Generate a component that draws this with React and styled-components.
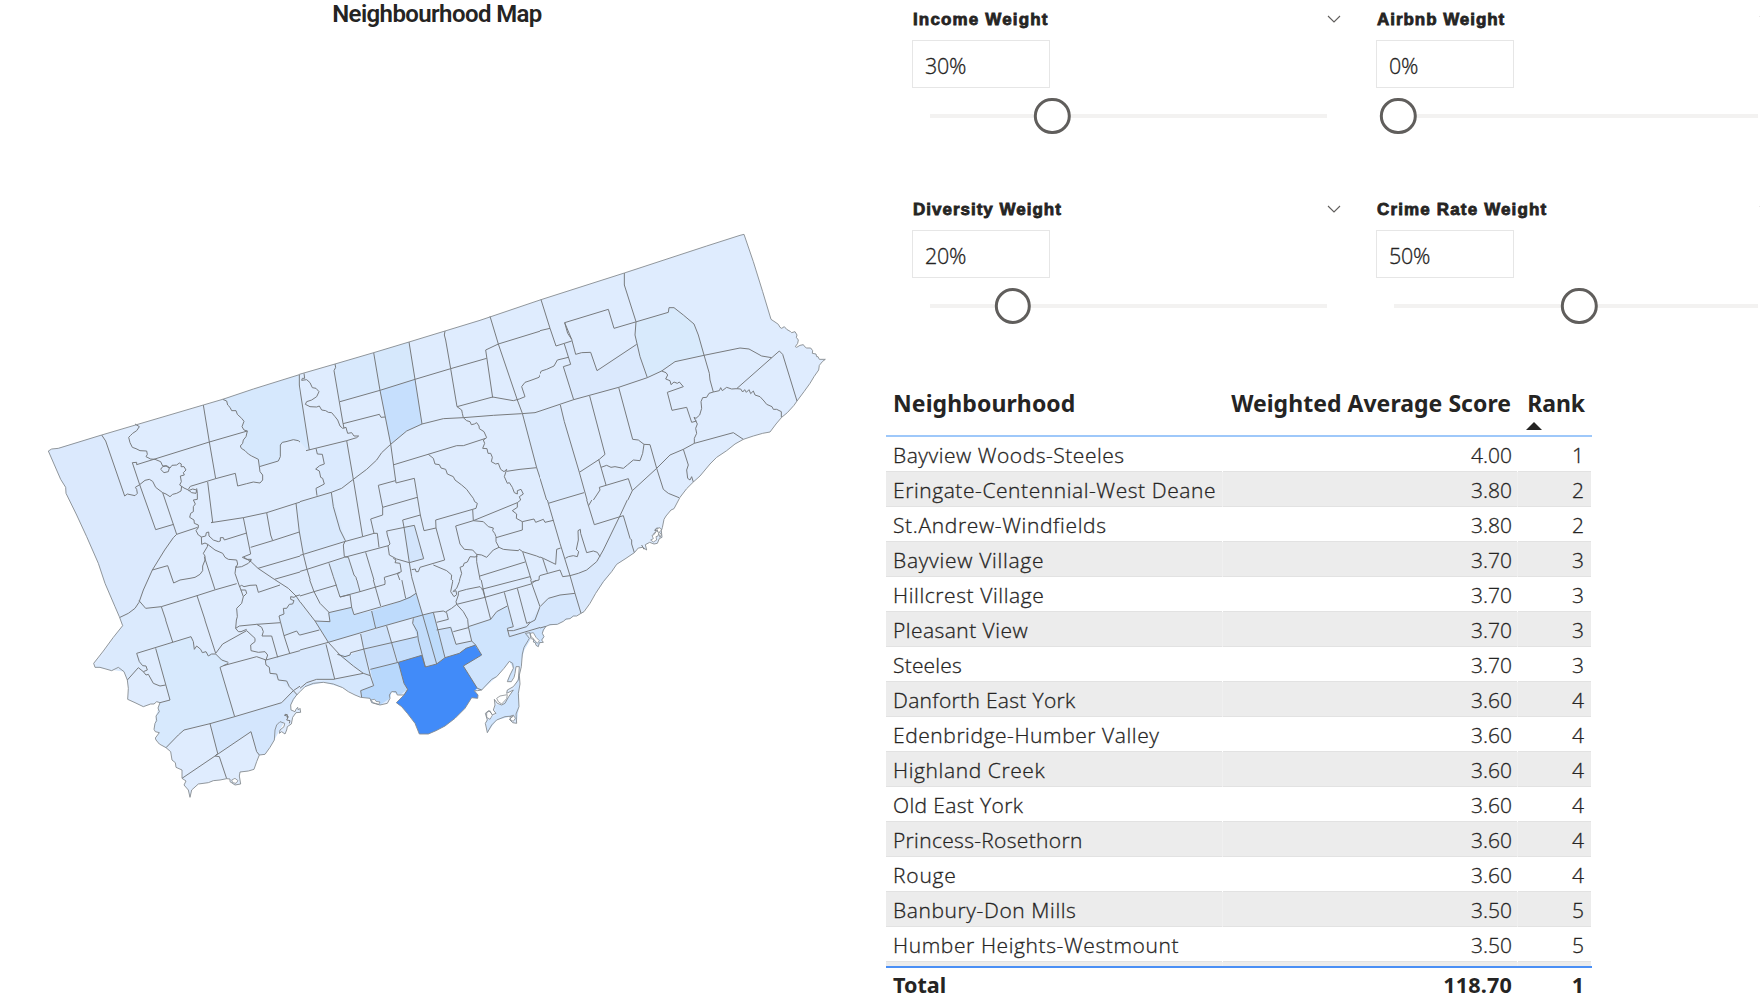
import React from "react";
import styled, { createGlobalStyle } from "styled-components";

const GlobalStyle = createGlobalStyle`
  * { box-sizing: border-box; }
  body { margin: 0; background: #fff; overflow: hidden; }
`;

const Report = styled.main`
  display: grid;
  grid-template-columns: 886px 874px;
  width: 1760px;
  height: 1008px;
  overflow: hidden;
  background: #fff;
  color: #252423;
  font-family: "Open Sans", "Noto Sans", sans-serif;
`;

const MapPanel = styled.section`
  display: flex;
  flex-direction: column;
  height: 1008px;
  overflow: hidden;
`;

const MapTitle = styled.h1`
  height: 30px;
  margin: 0;
  padding-right: 12px;
  font: 600 24px/29px Roboto, sans-serif;
  letter-spacing: -0.6px;
  text-align: center;
`;

const MapDrawing = styled.svg`
  display: block;
  flex: none;
  width: 886px;
  height: 978px;
`;

const SidePanel = styled.section`
  display: flex;
  flex-direction: column;
`;

const Slicers = styled.div`
  display: grid;
  grid-template-columns: 464px 464px;
  grid-template-rows: 190px 190px;
  width: 874px;
  height: 380px;
  padding-left: 26px;
  overflow: hidden;
`;

const Slicer = styled.div`
  display: flex;
  flex-direction: column;
  padding-top: 8px;
`;

const SlicerHeader = styled.div`
  display: flex;
  align-items: center;
  justify-content: space-between;
  width: ${(p) => p.$width}px;
  height: 22px;
  padding-left: 1px;
`;

const SlicerTitle = styled.h2`
  margin: 0;
  padding-top: 2px;
  font: 700 17px/22px "Liberation Sans", sans-serif;
  letter-spacing: ${(p) => p.$tracking}px;
  -webkit-text-stroke: 0.8px #252423;
  white-space: nowrap;
`;

const ValueBox = styled.div`
  width: 138px;
  height: 48px;
  margin-top: 10px;
  padding: 2px 0 0 12px;
  border: 1px solid #e6e6e6;
  font-size: 21.5px;
  line-height: 46px;
  letter-spacing: -0.3px;
  font-weight: 300;
  -webkit-text-stroke: 0.3px #252423;
`;

const Slider = styled.div`
  display: flex;
  align-items: center;
  width: ${(p) => p.$width}px;
  height: 37px;
  margin: 9.5px 0 0 18px;
`;

const Track = styled.div`
  position: relative;
  width: 100%;
  height: 4px;
  background: #f3f2f1;
`;

const Thumb = styled.div`
  position: absolute;
  top: -16.2px;
  width: 36.4px;
  height: 36.4px;
  border: 3px solid #605e5c;
  border-radius: 50%;
  background: #fff;
  transform: translateX(-50%);
`;

const Table = styled.div`
  display: flex;
  flex-direction: column;
  width: 706px;
  font-size: 21px;
`;

const columns = "337px 295px 74px";

const HeadRow = styled.div`
  display: grid;
  grid-template-columns: ${columns};
  height: 57px;
  border-bottom: 2px solid #9ec8fa;
`;

const HeadCell = styled.div`
  display: flex;
  flex-direction: column;
  align-items: ${(p) => (p.$right ? "flex-end" : "flex-start")};
  padding: 8px ${(p) => (p.$right ? 7 : 0)}px 0 7px;
  font: 700 23px/31px "Noto Sans", sans-serif;
  letter-spacing: ${(p) => p.$tracking}px;
  white-space: nowrap;
`;

const SortMark = styled.svg`
  align-self: flex-start;
  display: block;
  margin: 3px 0 0 1px;
`;

const Body = styled.div`
  display: flex;
  flex-direction: column;
  height: 529px;
  overflow: hidden;
`;

const Row = styled.div`
  display: grid;
  flex: none;
  grid-template-columns: ${columns};
  width: 705px;
  height: 35px;
  border-bottom: 1px solid #e2e2e2;
  background: ${(p) => (p.$striped ? "#ececec" : "#fff")};
  font-weight: 300;
  -webkit-text-stroke: 0.3px #252423;
`;

const Cell = styled.div`
  padding: 2px ${(p) => (p.$last ? 8 : 5)}px 0 7px;
  border-right: ${(p) => (p.$last ? 0 : 1)}px solid ${(p) => (p.$striped ? "#f0f0f0" : "#fff")};
  line-height: 33px;
  text-align: ${(p) => (p.$right ? "right" : "left")};
  letter-spacing: ${(p) => p.$tracking}px;
  white-space: nowrap;
`;

const TotalRow = styled.div`
  display: grid;
  grid-template-columns: ${columns};
  height: 36px;
  border-top: 2px solid #4a8ff5;
  font: 700 21.6px "Noto Sans", sans-serif;

  ${Cell} { padding-top: 1px; line-height: 32px; }
`;

/* Each map sheet is digitised at three units per screen pixel from its own origin. */
const SHEETS = {
  A: { x: 40, y: 360, clip: [0, 0, 780, 780] },
  B: { x: 280, y: 320, clip: [60, -100, 720, 880] },
  C: { x: 540, y: 220, clip: [0, 0, 900, 840] },
  D: { x: 80, y: 580, clip: [0, 120, 660, 570] },
  E: { x: 300, y: 560, clip: [0, 60, 720, 510] },
  F: { x: 460, y: 460, clip: [240, 120, 480, 720] },
};

const COAST = [
  ["A", "25,273 35,267 55,265 185,225 290,194 490,135 548,118 640,87 778,44"],
  ["B", "58,163 165,132 281,98 387,66 495,33 600,1"],
  ["C", "3,239 253,159 500,78 600,46 612,43 640,125 668,215 693,298 705,306 715,313 720,322 725,325 733,320 740,328 752,335 755,338 765,335 771,345 769,352 775,360 773,370 766,380 770,382 780,376 790,374 794,380 800,384 812,384 818,392 817,400 828,402 830,410 834,410 838,418 856,418 848,424 838,436 836,450 822,470 810,490 792,515 771,543 762,556 742,578 725,592 708,612 690,636 668,640 640,648 610,658 585,672 560,692 530,712 510,732 480,768 460,786 440,806 420,832 402,866 393,870 378,888"],
  ["F", "612,178 607,203 604,212 606,232 598,236 592,250 582,252 569,247 556,254 560,270 548,262 535,264 523,278 498,295 470,313 455,335 430,365 407,400 390,430 372,455 363,460 350,468 340,468 330,476 318,477 310,484 292,493 270,494 258,499 250,510 247,520 252,530 245,540 250,547 238,548 235,560 228,556 226,548 220,546 222,538 213,530 210,518 196,520 208,535 204,542 192,562 187,582 184,620"],
  ["E", "658,345 660,372 655,400 657,440 648,462 650,490 638,488 628,478 640,468 615,470 590,480 575,495 562,518 556,490 562,480 556,460 566,452 578,464 588,460 580,450 585,435 583,418 592,430 605,435 615,430 626,410 640,390 620,400 622,390 640,380 655,360 658,320 648,320 645,340 642,352 634,365 622,365 630,345 640,325 638,310 628,304 612,325 590,350 575,358 545,390 532,392 523,392 534,405 533,415 515,413 495,445 465,475 435,498 408,512 385,522 358,522 345,490 322,460 305,440 289,428 312,405 300,405 292,405 288,395 275,395 268,405 270,415 262,430 240,435 215,428 210,415 182,412 165,405 145,395 128,383 100,372 70,367 40,370 15,380"],
  ["D", "660,335 650,345 640,358 632,375 633,390 645,395 648,388 653,382 655,390 660,385 662,397 648,398 638,412 634,432 622,440 620,450 615,462 605,455 598,460 600,450 612,440 614,430 600,425 590,435 585,450 583,480 570,502 555,523 538,525 530,545 522,568 505,573 480,576 478,588 482,612 465,615 450,605 450,597 440,596 420,600 400,602 385,608 355,612 335,630 330,652 325,630 312,615 318,603 306,595 306,570 288,562 286,548 276,540 272,515 258,503 238,492 228,480 226,474 238,458 226,455 222,448 225,430 230,422 228,408 238,395 234,384 240,368 230,365 222,372 212,372 190,380 165,368 143,358 145,325 142,300 132,275 115,262 95,272 60,262 45,262 41,250 70,213 100,172 128,137 118,110"],
  ["A", "225,740 195,670 175,610 140,530 110,465 78,400 77,382 62,358"],
];

const AREAS = [
  ["A", "#dbe9fd", "25,273 185,225 254,408 290,400 286,382 299,374 347,509 401,493 410,523 374,570 337,630 300,722 285,745 265,760 240,772 225,740 195,670 175,610 140,530 110,465 78,400 77,382 62,358"],
  ["A", "#d6e8fd", "548,118 778,44 778,75 808,270 800,268 780,245 760,239 735,245 721,255 721,290 715,303 658,320 655,298 615,272 602,260 618,230 622,213 606,200 610,180 588,152 575,150 560,123"],
  ["A", "#d9e9fd", "768,430 874,397 916,542 791,583 778,516"],
  ["B", "#d8e9fd", "165,132 281,98 300,211 180,245 162,150"],
  ["B", "#d6e8fc", "281,98 387,66 405,178 300,211"],
  ["B", "#c6dffd", "300,211 405,178 426,312 380,333 332,372"],
  ["B", "#d3e5fc", "372,622 403,616 431,716 388,728"],
  ["B", "#d8e9fd", "147,730 205,712 238,815 180,832"],
  ["B", "#dbeafe", "108,390 200,362 220,478 185,505 111,527 108,505 133,492 118,457 107,447 133,432 127,403 112,402"],
  ["C", "#d8eafc", "288,305 385,277 387,263 402,263 462,312 492,405 405,425 365,453 322,473 300,410 285,345"],
  ["C", "#dbeafe", "-53,580 0,573 61,555 73,605 132,818 24,850 -10,743"],
  ["C", "#dbe9fd", "73,372 95,358 107,403 152,397 171,452 290,373 322,473 236,502 101,539 70,440 92,433"],
  ["D", "#d7e9fd", "227,205 333,170 343,205 407,222 445,247 420,262 464,410 312,450 295,465 258,503 228,480 238,458 222,448 228,408 240,368 270,360"],
  ["D", "#d4e6fd", "390,431 464,410 605,368 640,332 650,345 632,375 633,390 583,480 555,523 535,525 513,455 413,520"],
  ["D", "#d8e8fd", "558,240 740,190 765,298 710,297 680,305 640,332 595,300 570,280"],
  ["D", "#d7e8fd", "602,128 598,105 640,60 648,48 720,150 658,165 650,153 612,167"],
  ["D", "#dbeafd", "118,110 165,85 180,62 197,85 244,80 278,186 170,220 202,268 175,263 142,300 132,275 45,262 128,137"],
  ["E", "#c6e0fd", "45,183 90,185 86,158 155,142 162,164 215,153 227,205 85,247"],
  ["E", "#bedbfc", "215,153 300,124 348,100 368,165 227,205"],
  ["E", "#c3ddfb", "340,175 368,165 410,312 376,321 355,240 338,190"],
  ["E", "#bddbfb", "368,165 400,157 435,293 410,312"],
  ["E", "#cde2fc", "410,210 455,201 468,253 515,243 527,255 478,280 435,293"],
  ["E", "#cfe4fd", "505,200 572,178 590,155 622,138 640,200 622,205 628,230 682,217 692,238 673,270 665,300 662,320 648,320 640,350 630,365 622,360 640,325 628,304 590,350 545,390 532,385 490,318 545,285 515,243"],
  ["E", "#cfe4fd", "658,345 657,440 650,490 640,468 590,480 562,518 558,482 588,465 585,435 605,435 626,410 640,390"],
  ["E", "#cfe3fc", "182,222 260,198 275,248 190,266"],
  ["E", "#c9dffb", "192,267 275,248 292,307 211,328"],
  ["E", "#c3ddfc", "275,248 352,230 365,286 295,307"],
  ["E", "#cfe4fd", "112,283 150,285 192,267 211,347 190,340 160,318"],
  ["E", "#d5e7fd", "0,385 20,368 104,358 190,340 211,347 221,377 182,392 182,412 128,383 70,367 15,380"],
  ["E", "#b8d8fc", "211,328 295,307 312,370 323,388 300,405 275,395 270,415 240,435 215,428 210,415 185,412 182,392 221,377"],
  ["E", "#418bf9", "295,307 365,286 376,321 410,312 435,293 478,280 498,265 525,255 545,285 490,318 532,385 523,392 534,405 533,415 515,413 495,445 465,475 435,498 408,512 385,522 358,522 345,490 322,460 305,440 289,428 312,405 323,388 312,370"],
  ["F", "#d6e7fd", "205,492 240,440 265,415 300,405 345,400 363,460 292,493 258,499 145,530 150,508"],
  ["F", "#dae9fd", "330,347 380,330 410,305 480,167 490,167 523,278 470,313 363,460"],
  ["F", "#cfe4fd", "202,516 258,499 247,520 252,530 235,560"],
];

const HOLES = [
  ["E", "590,415 600,408 622,404 620,416 605,432 595,425"],
  ["E", "560,458 570,452 577,466 570,478 560,472"],
  ["E", "630,470 640,465 646,475 640,484 632,480"],
  ["E", "690,220 700,218 708,232 718,242 712,250 703,240 692,235"],
  ["F", "576,226 582,224 590,212 597,218 594,228 588,230 590,240 580,246 572,240 580,236"],
  ["F", "590,206 600,203 605,210 598,216 604,224 600,232 596,220"],
  ["D", "455,600 465,595 474,602 468,610 458,608"],
  ["E", "212,420 224,418 228,424 240,426 236,433 226,430 220,428"],
];

const BORDERS = {
  A: [
    "185,225 197,243 254,408 262,402 285,407 292,400 290,388 286,382 299,374 315,361 328,358 338,364 347,382 368,398 378,402 390,410 398,403 410,400 423,393 425,378",
    "285,192 298,200 290,212 278,220 272,226 266,232 270,248 277,262 288,266 300,272 320,273 322,283 318,290 332,297 345,298 362,305 368,318",
    "622,213 508,246 290,314 290,307 277,308 299,374 347,509 401,493",
    "490,135 508,246 527,356",
    "548,118 560,123 563,135 570,142 575,152 588,152 592,163 605,175 612,184 606,200 612,210 622,213 618,230 610,240 608,250 601,258 604,265 615,272 625,282 635,288 655,298 658,320 660,335 668,345 668,360 660,369 640,366 620,371 593,378 586,340 527,356 451,379 445,388",
    "362,328 368,320 378,318 388,324 385,335 372,338 362,328",
    "368,318 380,317 390,324 396,316 410,315 418,309 424,312 423,320 432,320 438,330 430,338 433,345 421,348 424,365 419,375 432,384 445,390 455,398 468,400 470,390 458,387 445,392",
    "368,398 410,523 473,502",
    "470,385 472,400 472,418 460,420 466,432 460,440 460,455 452,460 449,472 462,480 463,490 475,495 475,503 468,512 475,525 485,531 497,528 499,518 506,516 507,528 520,540 535,545 541,543 541,533 550,533 553,540 620,519",
    "503,366 518,486 513,488 610,473 680,458 768,430 840,408",
    "610,473 632,582 607,592 620,598 634,598 628,606",
    "680,458 692,525 698,542", "632,562 698,542 778,516",
    "768,430 778,516 791,585 801,632 822,695 840,740",
    "658,320 715,303 721,290 721,255 727,247 738,245 760,239 775,242 787,252 800,270 808,270 840,262",
    "778,44 778,75 808,270", "654,625 791,585 840,570", "703,658 801,630 840,615",
    "410,523 400,533 374,570 337,630 310,690 297,727 285,745 265,760 240,772",
    "337,630 383,617 401,669 420,660 450,655 465,652 480,643 488,632 488,618 495,600 495,588 490,580 502,560 503,553 495,549 485,553 484,531",
    "297,722 317,745 364,740 471,707 527,689 590,671", "493,590 525,689",
    "503,553 525,570 548,580 555,592 565,598 590,600 593,612 588,622 605,620 625,610 634,600",
    "588,618 585,640 597,675 603,690 610,710 620,700 617,690 602,690",
    "598,680 605,676 612,680 630,676 649,675 655,697 720,675",
    "612,592 634,606 654,625 703,658 745,685 768,708 800,755 840,810",
    "610,710 605,730 590,745 592,770 585,795",
    "822,693 768,708 762,712 752,710 752,718 762,722 758,732 748,733 740,745 730,745 732,762 717,768 720,780",
    "364,740 398,840", "471,707 515,840",
    "793,44 786,62 805,68 820,85 832,92 836,102 825,115 798,125 800,135 840,140",
  ],
  B: [
    "58,163 57,190 88,390", "108,385 112,402 127,403 133,432 119,437 107,447 118,453 122,472 128,475 133,492 108,505 111,527",
    "72,160 74,175 67,175 65,181 80,179 90,188 97,203 108,205 117,215 110,230 95,240 80,245 76,253 90,260 110,261 118,258 125,270 137,272 145,277 155,278 165,290 173,300 180,318 188,325 198,322 200,330 203,340 215,338 222,348 236,348 230,353 200,362 78,392",
    "165,132 167,142 162,152 189,310 192,325", "281,98 300,211 332,372", "387,66 405,178 426,312",
    "495,33 493,45 497,60 512,146 531,260", "180,245 300,211 405,178 512,146 620,115",
    "655,72 617,90 638,233", "655,72 808,25", "630,-11 655,72 712,240 727,280 770,443 805,550 820,605 840,680",
    "531,260 638,231 700,242 718,237 735,230 725,200 735,187 750,182 777,172 785,155 800,150 825,138 840,118",
    "802,0 808,25 827,76 840,73", "189,311 298,283 303,292 315,291",
    "0,563 46,549 154,517 185,505 220,478 260,448 290,420 305,398 332,373 380,333 426,312 490,296 550,293 640,286 725,281 765,278 840,253",
    "332,372 348,489", "342,434 530,377 550,377 617,355",
    "531,260 545,270 547,280 550,293 560,302 570,305 574,314 583,312 590,308 597,318 598,326 612,335 620,353 610,360 614,370 608,385 621,386 624,400 632,400 637,412 634,425 647,432 655,430 662,448 672,455 680,448 673,470 682,490 688,488 697,502 703,518 712,522 712,512 723,508 730,522 718,530 722,540 712,548 712,562 697,572 710,582 709,595 727,605 762,597 767,607 790,598 795,607 820,601",
    "680,454 720,448 770,443",
    "445,403 460,415 465,432 478,434 483,444 497,448 502,462 520,470 525,480 545,495 560,508 570,522 580,535 584,545 592,550 588,565 578,568 580,602 712,548",
    "578,568 467,600 468,624 494,720 420,742 415,755 408,755 406,747 395,749",
    "348,489 403,475 412,530 421,585 432,632 468,624", "346,482 295,496 308,562 412,532",
    "308,562 308,585 272,597 282,640 292,640 297,682", "200,362 220,478 248,650",
    "46,549 58,635 70,703 81,748 101,815 108,840", "154,517 160,560 180,630 196,662 190,675 193,710",
    "0,655 58,636", "0,725 70,703 193,665 248,650 282,640", "0,772 81,748 193,712 325,677",
    "421,585 368,600 372,622 388,728 395,770 411,840", "403,616 320,633 322,645 330,672 324,678 328,705 350,717 388,728 431,716 403,616",
    "580,602 527,618 540,672 553,688 578,690 590,703 605,705 620,712 640,690 657,682 648,665 648,650 644,640 638,632 640,624 625,620 610,605 580,602",
    "648,653 727,630 727,605", "657,682 670,688 690,690 715,692 718,688 728,695 770,708 827,733 830,685 840,683",
    "590,703 590,725 612,840", "600,768 735,726", "607,808 750,770", "728,695 757,790",
    "593,708 585,711 570,710 562,726 552,730 550,738 540,742 545,760 540,775 533,800 518,815",
    "518,830 512,795 515,765 500,752 460,735",
    "193,710 205,712 222,765 228,772 238,815", "147,730 160,770 180,832", "257,697 300,840",
    "101,815 165,795", "180,832 238,815 315,797 313,772 360,758", "340,715 348,720 345,728 360,730 364,755 352,760 378,830",
    "755,785 777,780 778,768 840,752", "790,715 800,760",
  ],
  C: [
    "3,239 30,325 48,378 95,363", "0,332 30,325",
    "95,358 74,308 205,268 222,325 385,277 387,263 402,263 430,285 462,312 475,345 492,405 508,460 510,480 520,516",
    "74,308 83,340 95,358 107,403 125,398 152,397 171,452 290,373",
    "253,159 253,195 288,305 285,345 300,410 322,473", "73,372 92,433 70,440 101,539", "-3,466 4,453 20,448 42,438 52,420 85,412",
    "0,573 101,539 236,502 322,473 365,453 405,425 492,406 600,384 627,387 665,408 695,413",
    "590,506 718,393 728,403 771,543",
    "365,453 378,458 383,465 377,477 390,482 393,494 402,486 412,490 418,486 430,500 382,517 396,571 440,562 455,607 470,603",
    "61,555 73,605 118,757 158,900", "149,528 195,703 178,718 118,757",
    "236,502 278,658 295,660 312,673 330,674 350,745 370,808 385,820 417,833",
    "312,673 308,700 300,722 280,720 262,735 250,745 225,740 213,742 200,736 183,742", "176,718 198,795",
    "147,860 180,810 178,802 265,776 277,812", "463,670 430,688 390,705 350,745 277,812 235,900",
    "463,670 580,638 610,658", "430,688 445,735 440,750 443,775 450,780 455,770 460,786",
    "520,516 507,520 500,532 488,533 483,545 485,565 479,585 468,595 462,592 472,612 467,625 470,640 463,655 463,670",
    "520,516 538,512 542,503 547,512 560,502 575,507 590,506 602,507 608,516 614,509 619,517 627,509 632,521 640,513 645,525 660,530 672,543 680,553 696,560 700,568 710,568 724,575 724,592",
    "0,775 38,900", "24,850 132,818",
  ],
  D: [
    "244,80 278,186", "351,47 407,220",
    "142,300 175,263 190,275 202,270 198,258 188,257 178,245 170,220 333,170 340,185 343,208 350,198 362,208 367,218 378,215 385,228 395,222 407,222 425,240 445,247",
    "190,275 198,285 205,283 220,310 240,318 257,315", "227,205 270,360 240,368",
    "407,220 428,192 500,152 525,175 525,185 512,195 513,212 535,217 555,215 563,225 558,240",
    "490,45 470,85 470,110 467,145 475,155 483,155 500,148", "467,145 478,138 530,133 602,128",
    "530,133 545,142 550,155 546,168 575,168 593,232", "602,80 604,100 597,110 602,128 612,167 629,220", "612,167 650,153 658,165 718,150",
    "445,250 420,262 464,410", "430,257 530,230 558,240 740,190",
    "556,240 558,255 568,262 570,280 590,282 595,300 620,303 628,320 640,332 652,345",
    "710,297 680,305 640,332 605,368 464,410 390,431 312,450 295,465 258,503",
    "390,431 413,520 405,528 418,530 440,596", "306,595 513,455 530,515 538,525",
    "612,405 625,410 620,420 630,422 628,430", "615,403 622,404 622,414",
  ],
  E: [
    "0,108 42,95 110,75", "18,30 42,95 60,130 88,158", "0,125 45,183 85,247 120,285 160,318 190,340 211,347",
    "45,183 90,185 86,158 155,142 162,164 245,140 300,124 330,112 348,100", "88,12 120,111 150,104 155,142",
    "120,111 180,95 255,73 255,55 300,40", "150,22 168,50 180,95", "203,0 242,138", "302,40 306,62 317,115",
    "215,153 227,205", "0,270 85,247 227,205 368,165 400,157", "325,10 335,50 348,98 368,165 410,312", "400,157 435,293",
    "340,175 338,190 352,215 355,240 376,321", "260,198 292,307", "182,222 190,262 211,347 221,377 182,392 185,412",
    "112,283 135,290 150,285 152,278 192,267 275,248 352,230", "211,328 295,307", "0,225 58,210", "78,253 104,357 190,340",
    "0,385 20,368 50,358 104,358", "400,157 430,153 440,158 445,178 410,187", "438,155 455,145 470,133 468,125 475,105 475,95 500,88 540,80 548,88 555,112",
    "455,28 458,65 452,95 462,110 470,104 468,92 460,95", "480,15 483,45 478,65 470,85 458,95",
    "470,133 555,112 693,72 740,38", "470,133 490,155 503,178 505,200 515,243 527,255", "410,210 452,202 468,253 515,243", "460,215 505,203",
    "525,5 535,20 555,112 572,178", "540,48 675,5", "545,88 690,50", "668,-20 695,70 720,140",
    "505,200 572,178 590,155 622,138", "613,97 640,200 622,205 628,230 735,198", "622,212 640,212 680,200 690,188 705,180 720,140", "652,85 680,190 690,186",
    "697,65 717,60 718,48 740,38", "532,385 490,318 545,285 527,255 498,265 478,280 435,293 410,312 376,321 365,286 295,307 312,370 323,388 312,405",
    "545,390 532,385",
  ],
  F: [
    "228,0 265,130 300,250 330,347 345,400 363,460", "265,130 373,97", "346,0 373,97 403,194 490,167 510,235 515,240 515,252 523,278",
    "385,138 418,82", "515,92 480,167 430,270 410,305 380,330 355,340 330,347",
    "222,177 227,187 250,178 255,187 280,181",
    "316,295 325,290 340,287 352,290 356,275 349,268 355,240 354,212 361,208 362,220 380,278 400,273 412,277 420,290",
    "302,264 290,268 287,313 250,295 230,287", "330,347 308,350 300,330 235,348 237,358 215,366", "248,295 262,338",
    "345,400 300,405 265,415 240,440 220,480 205,492",
    "180,505 205,492", "145,530 258,499", "580,222 590,214 600,206 590,204 584,211 600,216", "545,255 552,268",
  ],
};

const toMap = (sheet, list) =>
  list.split(" ").map((pair) => {
    const [x, y] = pair.split(",").map(Number);
    return `${(SHEETS[sheet].x + x / 3).toFixed(2)},${(SHEETS[sheet].y + y / 3).toFixed(2)}`;
  }).join(" ");

const coastline = COAST.map(([sheet, list]) => toMap(sheet, list)).join(" ");

const NeighbourhoodMap = () => (
  <MapDrawing viewBox="0 30 886 978">
    <defs>
      {Object.entries(SHEETS).map(([id, { x, y, clip }]) => (
        <clipPath id={`sheet-${id}`} key={id}>
          <rect x={x + clip[0] / 3} y={y + clip[1] / 3} width={clip[2] / 3} height={clip[3] / 3} />
        </clipPath>
      ))}
    </defs>
    <polygon points={coastline} fill="#dfecfe" />
    {AREAS.map(([sheet, fill, list], i) => (
      <polygon key={i} points={toMap(sheet, list)} fill={fill} />
    ))}
    {Object.entries(BORDERS).map(([sheet, lines]) => (
      <g key={sheet} clipPath={`url(#sheet-${sheet})`} fill="none" stroke="#787b7e" strokeWidth="1" strokeLinejoin="round">
        {lines.map((list, i) => <polyline key={i} points={toMap(sheet, list)} />)}
      </g>
    ))}
    {HOLES.map(([sheet, list], i) => (
      <polygon key={i} points={toMap(sheet, list)} fill="#fff" stroke="#868b90" strokeWidth="0.8" />
    ))}
    <polygon points={coastline} fill="none" stroke="#868b90" strokeWidth="0.9" strokeLinejoin="round" />
  </MapDrawing>
);

const Chevron = () => (
  <svg width="14" height="10" viewBox="0 0 14 10" fill="none" stroke="#605e5c" strokeWidth="1.1">
    <path d="M1 2l6 6 6-6" />
  </svg>
);

const slicers = [
  { title: "Income Weight", value: "30%", thumb: 122.3, head: 429, track: 396.5, tracking: 1.15 },
  { title: "Airbnb Weight", value: "0%", thumb: 4.3, head: 396.6, track: 363.5, tracking: 0.95 },
  { title: "Diversity Weight", value: "20%", thumb: 82.8, head: 429, track: 396.5, tracking: 1.0 },
  { title: "Crime Rate Weight", value: "50%", thumb: 185.2, head: 396.6, track: 363.5, tracking: 1.15 },
];

const rows = [
  ["Bayview Woods-Steeles", "4.00", "1", 0.53],
  ["Eringate-Centennial-West Deane", "3.80", "2", 0.57],
  ["St.Andrew-Windfields", "3.80", "2", 0.65],
  ["Bayview Village", "3.70", "3", 0.72],
  ["Hillcrest Village", "3.70", "3", 0.6],
  ["Pleasant View", "3.70", "3", 0.46],
  ["Steeles", "3.70", "3", 0.2],
  ["Danforth East York", "3.60", "4", 0.32],
  ["Edenbridge-Humber Valley", "3.60", "4", 0.57],
  ["Highland Creek", "3.60", "4", 0.6],
  ["Old East York", "3.60", "4", 0.37],
  ["Princess-Rosethorn", "3.60", "4", 0.32],
  ["Rouge", "3.60", "4", 0.8],
  ["Banbury-Don Mills", "3.50", "5", 0.6],
  ["Humber Heights-Westmount", "3.50", "5", 0.6],
  ["", "", "", 0],
];

export default function App() {
  return (
    <Report>
      <GlobalStyle />
      <MapPanel>
        <MapTitle>Neighbourhood Map</MapTitle>
        <NeighbourhoodMap />
      </MapPanel>
      <SidePanel>
        <Slicers>
          {slicers.map((s) => (
            <Slicer key={s.title}>
              <SlicerHeader $width={s.head}>
                <SlicerTitle $tracking={s.tracking}>{s.title}</SlicerTitle>
                <Chevron />
              </SlicerHeader>
              <ValueBox>{s.value}</ValueBox>
              <Slider $width={s.track}>
                <Track><Thumb style={{ left: s.thumb }} /></Track>
              </Slider>
            </Slicer>
          ))}
        </Slicers>
        <Table>
          <HeadRow>
            <HeadCell $tracking={0.1}>Neighbourhood</HeadCell>
            <HeadCell $right $tracking={0.03}>Weighted Average Score</HeadCell>
            <HeadCell $right $tracking={-0.1}>
              Rank
              <SortMark width="16" height="8"><path d="M0 8L8 0l8 8z" fill="#252423" /></SortMark>
            </HeadCell>
          </HeadRow>
          <Body>
            {rows.map(([name, score, rank, tracking], i) => (
              <Row key={i} $striped={i % 2 === 1}>
                <Cell $striped={i % 2 === 1} $tracking={tracking}>{name}</Cell>
                <Cell $striped={i % 2 === 1} $right $tracking={0}>{score}</Cell>
                <Cell $striped={i % 2 === 1} $right $last>{rank}</Cell>
              </Row>
            ))}
          </Body>
          <TotalRow>
            <Cell $tracking={0}>Total</Cell>
            <Cell $right $tracking={0.15}>118.70</Cell>
            <Cell $right $last>1</Cell>
          </TotalRow>
        </Table>
      </SidePanel>
    </Report>
  );
}
